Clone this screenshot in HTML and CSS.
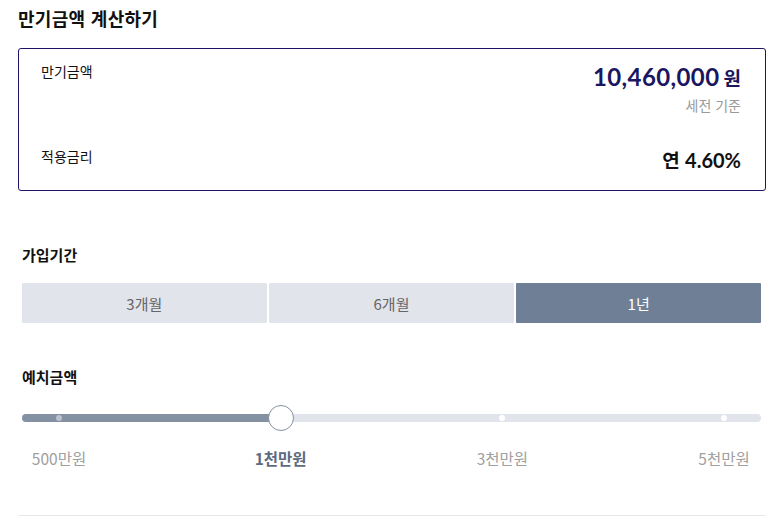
FILE: index.html
```html
<!DOCTYPE html>
<html lang="ko">
<head>
<meta charset="utf-8">
<title>만기금액 계산하기</title>
<link rel="stylesheet" href="styles.css">
</head>
<body>
<div class="calc">
  <h1 class="calc-title">만기금액 계산하기</h1>

  <div class="result">
    <div class="result-row">
      <div class="result-label">만기금액</div>
      <div class="result-value">
        <div class="amount"><span class="amount-num">10,460,000</span><span class="amount-unit">원</span></div>
        <div class="amount-sub">세전 기준</div>
      </div>
    </div>
    <div class="result-row result-row-rate">
      <div class="result-label">적용금리</div>
      <div class="rate">연 <span class="rate-num">4.60%</span></div>
    </div>
  </div>

  <div class="section section-period">
    <h2 class="section-title">가입기간</h2>
    <div class="tabs">
      <button class="tab">3개월</button>
      <button class="tab">6개월</button>
      <button class="tab tab-active">1년</button>
    </div>
  </div>

  <div class="section section-deposit">
    <h2 class="section-title">예치금액</h2>
    <div class="slider">
      <div class="slider-track">
        <div class="slider-fill" style="width:35%"></div>
        <span class="dot dot-on" style="left:5%"></span>
        <span class="dot" style="left:65%"></span>
        <span class="dot" style="left:95%"></span>
        <span class="thumb" style="left:35%"></span>
      </div>
    </div>
    <div class="slider-labels">
      <span class="slider-label">500만원</span>
      <span class="slider-label slider-label-active">1천만원</span>
      <span class="slider-label">3천만원</span>
      <span class="slider-label">5천만원</span>
    </div>
  </div>

  <div class="divider"></div>
</div>
</body>
</html>
```

FILE: styles.css
```css
* { box-sizing: border-box; }

html, body {
  margin: 0;
  padding: 0;
  background: #ffffff;
}

body {
  font-family: "Noto Sans CJK KR", "Noto Sans", sans-serif;
  color: #111111;
}

.calc {
  width: 778px;
  padding: 4px 12px 0 18px;
}

.calc-title {
  margin: 0;
  font-size: 18px;
  line-height: 28px;
  font-weight: 700;
  color: #111111;
  letter-spacing: 0.3px;
}

.result {
  margin-top: 16px;
  border: 1px solid #1d1466;
  border-radius: 3px;
  padding: 12px 24px 16px 22px;
}

.result-row {
  display: flex;
  justify-content: space-between;
  align-items: flex-start;
}

.result-row-rate {
  margin-top: 32px;
}

.result-label {
  font-size: 14px;
  line-height: 20px;
  color: #111111;
}

.result-value {
  display: flex;
  flex-direction: column;
  align-items: flex-end;
}

.amount {
  display: flex;
  align-items: baseline;
  line-height: 32px;
  color: #1b1660;
  font-weight: 700;
}

.amount-num {
  font-family: "Lato", "Noto Sans CJK KR", sans-serif;
  font-size: 24px;
  letter-spacing: 0.4px;
}

.amount-unit {
  font-size: 19px;
  margin-left: 4px;
}

.amount-sub {
  margin-top: 2px;
  font-size: 14px;
  line-height: 18px;
  color: #9a9a9a;
}

.rate {
  font-size: 19px;
  line-height: 28px;
  font-weight: 700;
  color: #111111;
}

.rate-num {
  font-family: "Lato", "Noto Sans CJK KR", sans-serif;
  font-size: 20px;
}

.section {
  padding: 0 5px 0 4px;
}

.section-period { margin-top: 54px; }
.section-deposit { margin-top: 44px; }

.section-title {
  margin: 0;
  font-size: 15px;
  line-height: 20px;
  font-weight: 700;
  color: #111111;
}

.tabs {
  margin-top: 18px;
  display: flex;
  gap: 2.5px;
}

.tab {
  flex: 1;
  height: 40px;
  border: 0;
  border-radius: 1px;
  background: #e1e4eb;
  color: #666666;
  font-family: "Noto Sans CJK KR", sans-serif;
  font-size: 15px;
  padding: 0;
}

.tab-active {
  background: #6e7f96;
  color: #ffffff;
}

.slider {
  margin-top: 18px;
  height: 26px;
  display: flex;
  align-items: center;
}

.slider-track {
  position: relative;
  width: 100%;
  height: 8px;
  border-radius: 4px;
  background: #e1e4eb;
}

.slider-fill {
  height: 100%;
  border-radius: 4px 0 0 4px;
  background: #8391a3;
}

.dot {
  position: absolute;
  top: 1px;
  width: 6px;
  height: 6px;
  margin-left: -3px;
  border-radius: 50%;
  background: #ffffff;
}

.dot-on {
  background: #bcc3ce;
}

.thumb {
  position: absolute;
  top: -9px;
  width: 26px;
  height: 26px;
  margin-left: -13px;
  border-radius: 50%;
  background: #ffffff;
  border: 1px solid #8391a3;
}

.slider-labels {
  margin-top: 16px;
  display: flex;
  justify-content: space-between;
  padding: 0 37px;
}

.slider-label {
  width: 0;
  display: flex;
  justify-content: center;
  white-space: nowrap;
  font-size: 15.5px;
  line-height: 22px;
  color: #a0a0a0;
}

.slider-label-active {
  font-weight: 700;
  color: #5e6b7f;
}

.divider {
  margin-top: 46px;
  height: 1px;
  background: #e8e8e8;
}
```
